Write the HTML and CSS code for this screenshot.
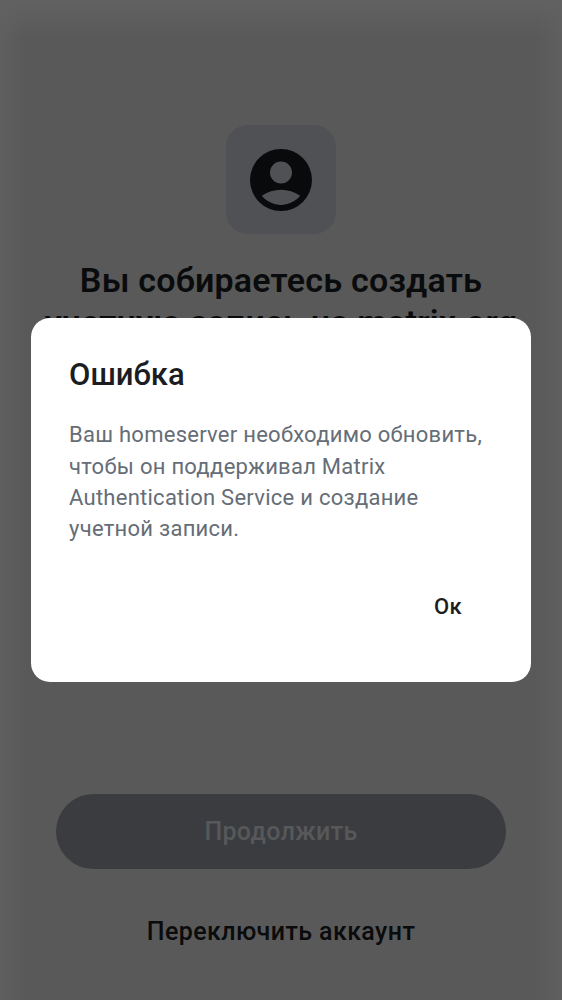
FILE: index.html
```html
<!DOCTYPE html>
<html lang="ru">
<head>
<meta charset="utf-8">
<title>Ошибка</title>
<link rel="stylesheet" href="styles.css">
</head>
<body>
<main class="screen">
  <div class="icon-tile">
    <svg class="account" viewBox="0 0 62 62"><path fill-rule="evenodd" d="M31 0a31 31 0 1 0 0 62a31 31 0 0 0 0-62ZM31 12.500a11 11 0 1 1 0 22a11 11 0 0 1 0-22ZM11.800 46.800C23 38.700 39 38.700 50.200 46.800C40 59 22 59 11.800 46.800Z"/></svg>
  </div>
  <h1 class="title">Вы собираетесь создать<br>учетную запись на matrix.org</h1>
  <div class="actions">
    <button class="continue">Продолжить</button>
    <button class="switch">Переключить аккаунт</button>
  </div>
</main>
<div class="overlay">
  <section class="dialog" role="alertdialog">
    <h2 class="dialog-title">Ошибка</h2>
    <p class="message">Ваш homeserver необходимо обновить,<br>чтобы он поддерживал Matrix<br>Authentication Service и создание<br>учетной записи.</p>
    <button class="ok">Ок</button>
  </section>
</div>
</body>
</html>
```
FILE: styles.css
```css
* { box-sizing: border-box; }
body { margin: 0; font-family: Roboto, sans-serif; background: #595959; }
button { border: 0; padding: 0; background: none; font-family: inherit; }
h1, h2, p { margin: 0; }
.screen { height: 1000px; display: flex; flex-direction: column; align-items: center; padding: 125px 0 51px; background: linear-gradient(#616161, rgba(97, 97, 97, 0) 38px), linear-gradient(90deg, #5f5f5f, rgba(95, 95, 95, 0) 26px, rgba(95, 95, 95, 0) 536px, #5f5f5f), #595959; color: #0a0b0c; }
.icon-tile { width: 110px; height: 109px; border-radius: 22px; background: #505155; display: grid; place-items: center; flex: none; }
.account { width: 62px; height: 62px; fill: #090a0c; }
.title { margin-top: 25px; font-size: 34px; line-height: 42px; font-weight: 600; letter-spacing: .22px; text-align: center; white-space: nowrap; }
.actions { margin-top: auto; display: flex; flex-direction: column; align-items: center; gap: 44px; }
.continue { width: 450px; height: 75px; border-radius: 38px; background: #3b3c40; color: #57585a; font-size: 25px; font-weight: 500; letter-spacing: .35px; }
.switch { height: 36px; font-size: 25px; font-weight: 500; letter-spacing: .4px; color: #0a0b0c; white-space: nowrap; }
.overlay { position: absolute; inset: 0; display: grid; place-items: center; }
.dialog { width: 500px; height: 364px; border-radius: 19px; background: #fff; padding: 36px 38px; display: flex; flex-direction: column; }
.dialog-title { font-size: 31px; line-height: 42px; font-weight: 500; color: #1b1d22; letter-spacing: .05px; }
.message { margin-top: 23.400px; font-size: 22px; line-height: 31.25px; color: #656d77; letter-spacing: .26px; white-space: nowrap; }
.ok { align-self: flex-end; margin: 46.600px 31px 0 0; font-size: 22px; line-height: 32px; font-weight: 500; color: #1b1d22; letter-spacing: .3px; }
```
